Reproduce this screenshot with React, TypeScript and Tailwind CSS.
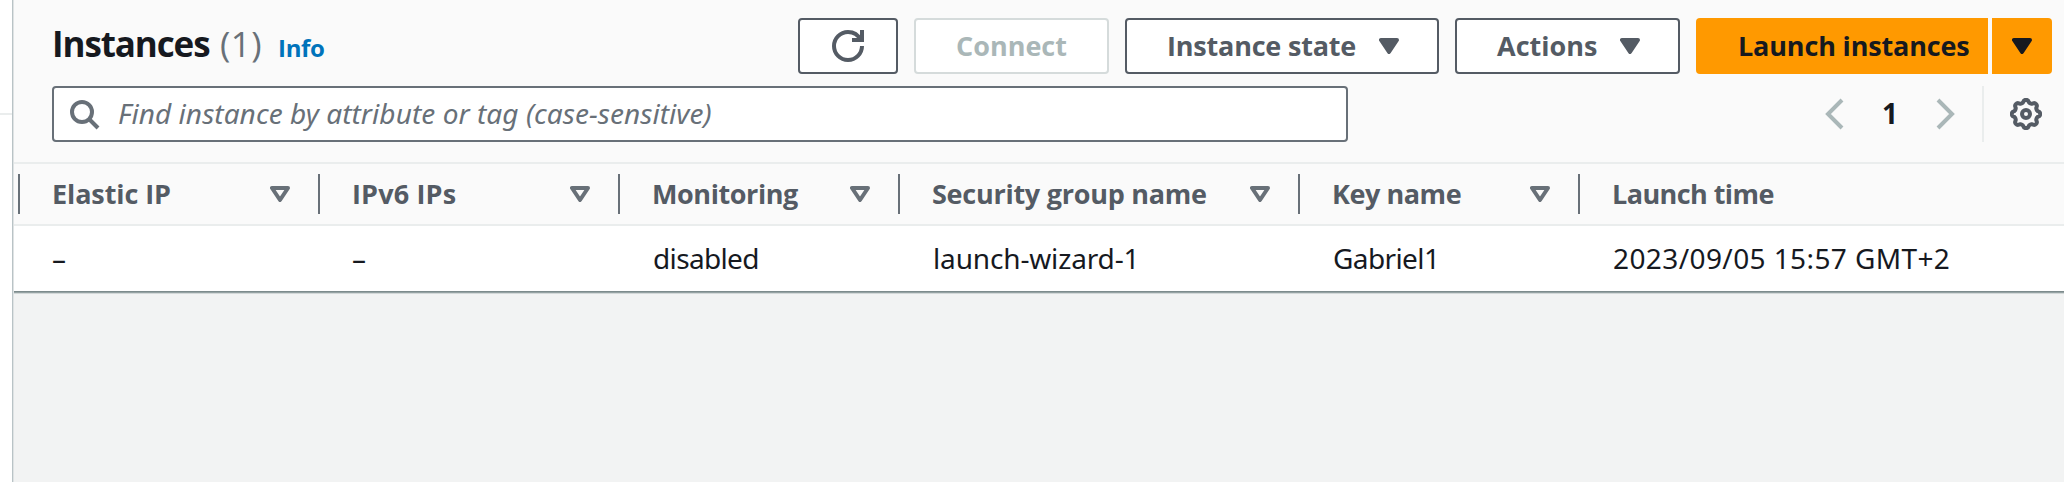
import React from 'react';

const gearPath = (() => {
  const pts: string[] = [];
  for (let i = 0; i < 192; i++) {
    const a = (i / 192) * Math.PI * 2;
    const r = 12.8 + 1.3 * (Math.tanh(1.6 * Math.cos(8 * a)) / Math.tanh(1.6));
    pts.push(`${(16 + r * Math.cos(a)).toFixed(2)} ${(16 + r * Math.sin(a)).toFixed(2)}`);
  }
  return `M${pts.join('L')}Z`;
})();

function Caret({ open = false, className = '' }: { open?: boolean; className?: string }) {
  return (
    <svg
      viewBox="0 0 20 16"
      className={`h-4 w-5 shrink-0 ${className}`}
      fill={open ? 'none' : 'currentColor'}
      stroke="currentColor"
      strokeWidth="4"
      strokeLinejoin="round"
    >
      <path d="M2 2h16l-8 12z" />
    </svg>
  );
}

const button =
  'flex h-14 shrink-0 items-center whitespace-nowrap rounded-[4px] border-2 bg-white text-[27px] font-bold';

type Column = { label: string; value: string; width: string; head: string; body: string; sortable: boolean };

const columns: Column[] = [
  { label: 'Elastic IP', value: '–', width: 'w-[300px]', head: 'tracking-[-0.1px]', body: 'pl-[38px]', sortable: true },
  { label: 'IPv6 IPs', value: '–', width: 'w-[300px]', head: 'tracking-[0.15px]', body: 'pl-[38px]', sortable: true },
  { label: 'Monitoring', value: 'disabled', width: 'w-[280px]', head: 'tracking-[-0.42px]', body: 'pl-[39px] tracking-[-0.65px]', sortable: true },
  { label: 'Security group name', value: 'launch-wizard-1', width: 'w-[400px]', head: 'tracking-[-0.26px]', body: 'pl-[39px] tracking-[-0.15px]', sortable: true },
  { label: 'Key name', value: 'Gabriel1', width: 'w-[280px]', head: 'tracking-[-0.45px]', body: 'pl-[39px] tracking-[-0.6px]', sortable: true },
  { label: 'Launch time', value: '2023/09/05 15:57 GMT+2', width: 'w-[486px]', head: 'tracking-[-0.57px]', body: 'pl-[39px] tracking-[0.4px]', sortable: false },
];

export default function App() {
  return (
    <div className="flex h-[482px] w-[2064px] overflow-hidden bg-white font-['Open_Sans','Noto_Sans',sans-serif] text-[#545b64]">
      <div className="w-3 shrink-0 pt-[113px]">
        <div className="h-[2px] bg-[#eaeded]" />
      </div>
      <div className="w-px shrink-0 bg-[#b9c3c6]" />
      <div className="w-px shrink-0 bg-[#dfe3e4]" />

      <main className="flex min-w-0 flex-1 flex-col bg-[#f2f3f3]">
        <header className="h-[162px] shrink-0 bg-[#fafafa] pr-3 pl-[38px] pt-[18px]">
          <div className="flex h-14 items-center">
            <h1 className="flex w-[740px] items-baseline whitespace-nowrap text-[35px] leading-[52px]">
              <span className="w-[168px] font-bold tracking-[-1.1px] text-[#16191f]">Instances</span>
              <span className="w-[58px] tracking-[0.4px] text-[#687078]">(1)</span>
              <span className="text-[24px] font-bold tracking-[-0.3px] text-[#0073bb]">Info</span>
            </h1>
            <div className="ml-[6px] flex gap-4">
              <button className={`${button} w-[100px] justify-center border-[#545b64]`}>
                <svg viewBox="0 0 16 16" className="h-8 w-8" fill="none" stroke="currentColor" strokeWidth="2">
                  <path d="M15 8c0 3.87-3.13 7-7 7s-7-3.13-7-7 3.13-7 7-7c2.79 0 5.2 1.63 6.33 4" />
                  <path d="M10 5h5V0" />
                </svg>
              </button>
              <button className={`${button} w-[195px] border-[#d5dbdb] pl-10 text-[#aab7b8]`}>Connect</button>
              <button className={`${button} w-[314px] justify-between border-[#545b64] pr-[38px] pl-10 tracking-[-0.2px]`}>
                Instance state
                <Caret />
              </button>
              <button className={`${button} w-[225px] justify-between border-[#545b64] pr-[38px] pl-10`}>
                Actions
                <Caret />
              </button>
              <div className="flex h-14 gap-1 text-[#16191f]">
                <button className="flex w-[292px] items-center whitespace-nowrap rounded-l-[4px] bg-[#ff9900] pl-[42px] text-[27px] font-bold tracking-[-0.16px]">
                  Launch instances
                </button>
                <button className="flex w-[60px] items-center justify-center rounded-r-[4px] bg-[#ff9900]">
                  <Caret />
                </button>
              </div>
            </div>
          </div>

          <div className="mt-3 flex h-14 items-center">
            <div className="flex h-14 w-[1296px] items-center rounded-[4px] border-2 border-[#687078] bg-white pl-[14px] text-[#687078]">
              <svg viewBox="0 0 16 16" className="h-8 w-8" fill="none" stroke="currentColor" strokeWidth="2">
                <circle cx="7" cy="7" r="5" />
                <path d="M15 15l-4.5-4.5" />
              </svg>
              <span className="ml-[18px] whitespace-nowrap pb-[2px] font-['Noto_Sans',sans-serif] text-[28px] tracking-[0.06px] italic">
                Find instance by attribute or tag (case-sensitive)
              </span>
            </div>
            <svg viewBox="0 0 32 32" className="ml-[472px] h-8 w-8 text-[#aab7b8]" fill="none" stroke="currentColor" strokeWidth="4">
              <path d="M22 2L8 16l14 14" />
            </svg>
            <span className="w-[76px] pb-[2px] text-center text-[28px] font-bold text-[#16191f]">1</span>
            <svg viewBox="0 0 32 32" className="h-8 w-8 text-[#aab7b8]" fill="none" stroke="currentColor" strokeWidth="4">
              <path d="M10 2l14 14-14 14" />
            </svg>
            <div className="ml-[22px] h-14 w-[2px] bg-[#eaeded]" />
            <svg viewBox="0 0 32 32" className="ml-[26px] h-8 w-8" fill="none" stroke="currentColor" strokeWidth="4" strokeLinejoin="round">
              <path d={gearPath} />
              <circle cx="16" cy="16" r="4" />
            </svg>
          </div>
        </header>

        <section className="shrink-0 border-b border-[#7d8b8c] bg-white">
          <div className="flex h-16 items-center border-y-2 border-[#eaeded] bg-[#fafafa] pl-1">
            {columns.map((c) => (
              <div key={c.label} className={`flex h-10 shrink-0 items-center justify-between border-l-2 border-[#687078] pr-7 pl-8 ${c.width}`}>
                <span className={`whitespace-nowrap text-[27px] font-bold ${c.head}`}>{c.label}</span>
                {c.sortable && <Caret open className="text-[#687078]" />}
              </div>
            ))}
          </div>
          <div className="flex h-[65px] font-['Noto_Sans',sans-serif] text-[28px] leading-[64px] text-[#16191f]">
            {columns.map((c) => (
              <div key={c.label} className={`shrink-0 whitespace-nowrap ${c.width} ${c.body}`}>
                {c.value}
              </div>
            ))}
          </div>
        </section>
        <div className="h-px shrink-0 bg-[#95a2a3]" />
        <div className="h-px shrink-0 bg-[#d3d8d8]" />
      </main>
    </div>
  );
}
